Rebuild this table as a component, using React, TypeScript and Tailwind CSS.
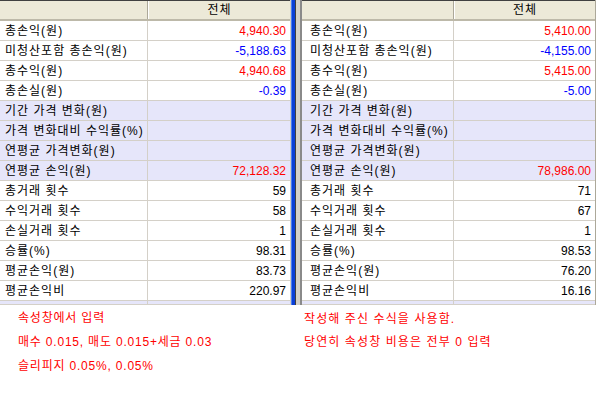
import React from "react";

type Tone = "red" | "blue" | "black";

interface IStatRow {
  label: string;
  left: string;
  right: string;
  tone: Tone;
  shaded?: boolean;
}

const statRows: IStatRow[] = [
  { label: "총손익(원)", left: "4,940.30", right: "5,410.00", tone: "red" },
  { label: "미청산포함 총손익(원)", left: "-5,188.63", right: "-4,155.00", tone: "blue" },
  { label: "총수익(원)", left: "4,940.68", right: "5,415.00", tone: "red" },
  { label: "총손실(원)", left: "-0.39", right: "-5.00", tone: "blue" },
  { label: "기간 가격 변화(원)", left: "", right: "", tone: "black", shaded: true },
  { label: "가격 변화대비 수익률(%)", left: "", right: "", tone: "black", shaded: true },
  { label: "연평균 가격변화(원)", left: "", right: "", tone: "black", shaded: true },
  { label: "연평균 손익(원)", left: "72,128.32", right: "78,986.00", tone: "red", shaded: true },
  { label: "총거래 횟수", left: "59", right: "71", tone: "black" },
  { label: "수익거래 횟수", left: "58", right: "67", tone: "black" },
  { label: "손실거래 횟수", left: "1", right: "1", tone: "black" },
  { label: "승률(%)", left: "98.31", right: "98.53", tone: "black" },
  { label: "평균손익(원)", left: "83.73", right: "76.20", tone: "black" },
  { label: "평균손익비", left: "220.97", right: "16.16", tone: "black" },
];

function toneClass(tone: Tone) {
  if (tone === "red") return "text-[#ff0000]";
  if (tone === "blue") return "text-[#0000ff]";
  return "text-black";
}

function StatPanel({ side }: { side: "left" | "right" }) {
  const isLeft = side === "left";
  const labelW = isLeft ? "w-[148px]" : "w-[152px]";
  const labelPad = isLeft ? "pl-[5px]" : "pl-[8px]";

  return (
    <div className="flex flex-col">
      {/* header */}
      <div className="flex h-[21px] border-t border-t-[#404040] border-b-2 border-b-[#bdb9a9] bg-[#ece9d8]">
        <div className={`${labelW} shrink-0 border-r border-r-[#aca899]`} />
        <div className="flex flex-1 items-center justify-center border-l border-l-white tracking-[1px]">전체</div>
      </div>

      {statRows.map((row) => (
        <div
          key={row.label}
          className={`flex h-[20px] border-b border-b-[#d4d0c8] ${row.shaded ? "bg-[#e6e6fa]" : "bg-white"}`}
        >
          <div className={`${labelW} ${labelPad} flex shrink-0 items-center border-r border-r-[#d4d0c8] whitespace-nowrap tracking-[1px]`}>
            {row.label}
          </div>
          <div className={`flex flex-1 items-center justify-end pr-[4px] ${toneClass(row.tone)}`}>
            {isLeft ? row.left : row.right}
          </div>
        </div>
      ))}

      {/* partial next row */}
      <div className="flex h-[4px] border-b border-b-[#d4d0c8] bg-[#e6e6fa]">
        <div className={`${labelW} shrink-0 border-r border-r-[#d4d0c8]`} />
      </div>
    </div>
  );
}

export default function App() {
  return (
    <div className="h-[396px] w-[599px] overflow-hidden bg-white text-[12px] leading-none text-black [font-family:'Liberation_Sans','Noto_Sans_CJK_KR',sans-serif]">
      <div className="flex">
        <div className="w-[291px] shrink-0 border-r border-r-[#d4d0c8]">
          <StatPanel side="left" />
        </div>

        {/* splitter */}
        <div className="flex h-[305px] shrink-0">
          <div className="w-px bg-[#4a7ef0]" />
          <div className="w-[3px] bg-[#0b3fd6]" />
          <div className="w-px bg-[#404040]" />
          <div className="w-[4px] bg-[#d4d0c8]" />
          <div className="w-[2px] bg-[#8a8a8a]" />
        </div>

        <div className="w-[294px] shrink-0 border-r border-r-[#aca899]">
          <StatPanel side="right" />
        </div>
      </div>

      <div className="flex text-[#ff0000] tracking-[0.8px]">
        <div className="w-[304px] shrink-0 pt-[1px] pl-[18px] leading-[24px]">
          <div>속성창에서 입력</div>
          <div>매수 0.015, 매도 0.015+세금 0.03</div>
          <div>슬리피지 0.05%, 0.05%</div>
        </div>
        <div className="pt-[3px] leading-[23px] tracking-[1.1px]">
          <div>작성해 주신 수식을 사용함.</div>
          <div>당연히 속성창 비용은 전부 0 입력</div>
        </div>
      </div>
    </div>
  );
}
